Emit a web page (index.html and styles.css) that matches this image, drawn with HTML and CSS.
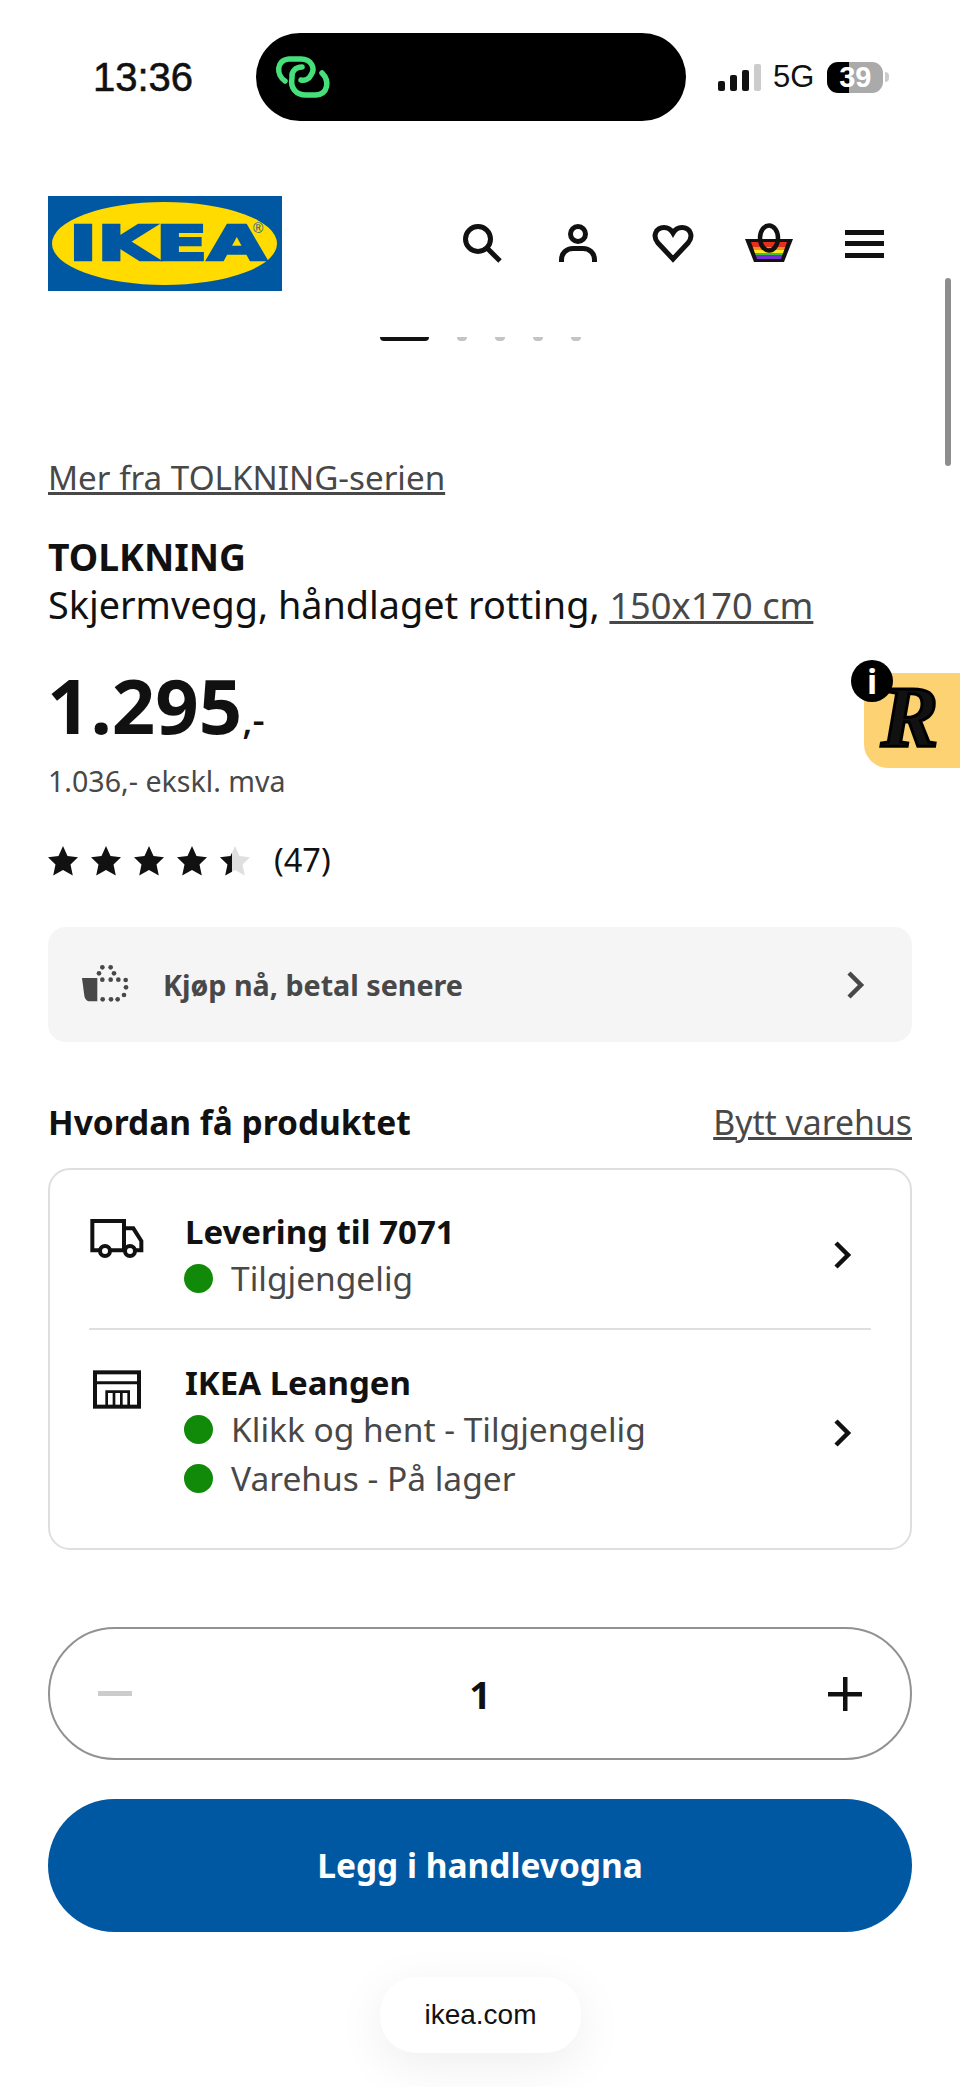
FILE: index.html
```html
<!DOCTYPE html>
<html lang="nb">

<head>
    <meta charset="UTF-8">
    <meta name="viewport" content="width=device-width, initial-scale=1.0">
    <title>TOLKNING Skjermvegg - IKEA</title>
    <link rel="stylesheet" href="styles.css">
</head>

<body>
    <svg class="defs" width="0" height="0" aria-hidden="true">
        <defs>
            <symbol id="star" viewBox="0 0 30 30">
                <polygon points="15,0 19.500,10 30,11.300 22.500,18.500 24.800,29.500 15,24 5.200,29.500 7.500,18.500 0,11.300 10.500,10"></polygon>
            </symbol>
            <symbol id="chevron" viewBox="0 0 20 30">
                <polyline points="3,3 15,15 3,27" fill="none" stroke="currentColor" stroke-width="4.500"></polyline>
            </symbol>
            <clipPath id="bag-inner">
                <polygon points="6,23 42,23 36,40 12,40"></polygon>
            </clipPath>
            <clipPath id="half-star">
                <rect x="0" y="0" width="12" height="30"></rect>
            </clipPath>
        </defs>
    </svg>

    <div class="phone-bar">
        <span class="clock">13:36</span>
        <div class="island">
            <svg class="island-icon" width="58" height="44" viewBox="0 0 58 44" fill="none" stroke="#45e07a" stroke-width="5.500" stroke-linecap="round">
                <path d="M11 26 C2 20 2 5 15 4 H27 C37 4 42 13 37 20 C35 24 31 26 27 25"></path>
                <path d="M28 12 C22 12 17 16 18 23 C16 33 22 40 32 40 H42 C54 39 56 26 48 18"></path>
            </svg>
        </div>
        <div class="phone-status">
            <div class="signal">
                <span class="bar bar-1"></span>
                <span class="bar bar-2"></span>
                <span class="bar bar-3"></span>
                <span class="bar bar-4"></span>
            </div>
            <span class="network">5G</span>
            <div class="battery"><span>39</span></div>
            <span class="battery-tip"></span>
        </div>
    </div>

    <header class="site-header">
        <svg class="logo" width="234" height="95" viewBox="0 0 234 95">
            <rect width="234" height="95" fill="#0058a3"></rect>
            <ellipse cx="116.500" cy="47.500" rx="112.500" ry="41.500" fill="#ffdb00"></ellipse>
            <text class="logo-word" x="21" y="64" textLength="197" lengthAdjust="spacingAndGlyphs">IKEA</text>
            <text class="logo-mark" x="205" y="37">®</text>
        </svg>
        <nav class="header-icons">
            <svg width="48" height="48" viewBox="0 0 48 48" fill="none" stroke="#111" stroke-width="5">
                <circle cx="20" cy="20" r="12.500"></circle>
                <line x1="29" y1="29" x2="42" y2="42"></line>
            </svg>
            <svg width="48" height="48" viewBox="0 0 48 48" fill="none" stroke="#111" stroke-width="5">
                <circle cx="24" cy="15" r="7.500"></circle>
                <path d="M7.500 43 v-2 c0-7 5-11.500 11.500-11.500 h10 c6.500 0 11.500 4.500 11.500 11.500 v2"></path>
            </svg>
            <svg width="48" height="48" viewBox="0 0 48 48" fill="none" stroke="#111" stroke-width="5">
                <path d="M24 40 L9 24 C3 17 7 8.500 15 8.500 C19 8.500 22 10.500 24 14 C26 10.500 29 8.500 33 8.500 C41 8.500 45 17 39 24 Z"></path>
            </svg>
            <svg width="48" height="48" viewBox="0 0 48 48">
                <polygon points="0,20 48,20 39,43 9,43" fill="#111"></polygon>
                <g clip-path="url(#bag-inner)">
                    <rect x="0" y="23" width="48" height="5" fill="#e6301e"></rect>
                    <rect x="0" y="28" width="48" height="3" fill="#f78d1e"></rect>
                    <rect x="0" y="31" width="48" height="3" fill="#ffe81e"></rect>
                    <rect x="0" y="34" width="48" height="2" fill="#3bc13b"></rect>
                    <rect x="0" y="36" width="48" height="1" fill="#2255d0"></rect>
                    <rect x="0" y="37" width="48" height="3" fill="#7a2bd8"></rect>
                </g>
                <ellipse cx="24" cy="19" rx="9" ry="12.500" fill="none" stroke="#111" stroke-width="4.500"></ellipse>
            </svg>
            <svg width="48" height="48" viewBox="0 0 48 48" fill="#111">
                <rect x="5" y="11" width="39" height="5"></rect>
                <rect x="5" y="22" width="39" height="5"></rect>
                <rect x="5" y="34" width="39" height="5"></rect>
            </svg>
        </nav>
    </header>

    <div class="gallery-dots">
        <span class="dot dot-active"></span>
        <span class="dot"></span>
        <span class="dot"></span>
        <span class="dot"></span>
        <span class="dot"></span>
    </div>

    <main class="product">
        <a class="series-link" href="#">Mer fra TOLKNING-serien</a>

        <h1 class="product-name">TOLKNING</h1>
        <p class="product-desc">Skjermvegg, håndlaget rotting, <a href="#">150x170 cm</a></p>

        <p class="price">1.295<span class="price-end">,-</span></p>
        <p class="price-ex">1.036,- ekskl. mva</p>

        <div class="rating">
            <div class="stars">
                <svg class="star"><use href="#star"></use></svg>
                <svg class="star"><use href="#star"></use></svg>
                <svg class="star"><use href="#star"></use></svg>
                <svg class="star"><use href="#star"></use></svg>
                <svg class="star star-half" viewBox="0 0 30 30">
                    <use href="#star" width="30" height="30" fill="#dfdfdf"></use>
                    <g clip-path="url(#half-star)"><use href="#star" width="30" height="30" fill="#111"></use></g>
                </svg>
            </div>
            <span class="rating-count">(47)</span>
        </div>

        <a class="pay-later" href="#">
            <svg width="50" height="42" viewBox="120 410 150 126" fill="#484848">
                <path d="M126 452 H172 V522 H150 C140 522 135 515 133 505 Z"></path>
                <circle cx="187" cy="420" r="7"></circle>
                <circle cx="212" cy="420" r="7"></circle>
                <circle cx="177" cy="438" r="7"></circle>
                <circle cx="222" cy="438" r="7"></circle>
                <circle cx="187" cy="457" r="7"></circle>
                <circle cx="212" cy="457" r="7"></circle>
                <circle cx="235" cy="457" r="7"></circle>
                <circle cx="257" cy="458" r="7"></circle>
                <circle cx="258" cy="480" r="7"></circle>
                <circle cx="252" cy="503" r="7"></circle>
                <circle cx="233" cy="516" r="7"></circle>
                <circle cx="213" cy="516" r="7"></circle>
                <circle cx="188" cy="516" r="7"></circle>
            </svg>
            <span class="pay-later-text">Kjøp nå, betal senere</span>
            <svg class="chevron"><use href="#chevron"></use></svg>
        </a>

        <div class="delivery-head">
            <h2>Hvordan få produktet</h2>
            <a href="#">Bytt varehus</a>
        </div>

        <section class="delivery-card">
            <div class="delivery-row">
                <svg class="delivery-icon" width="55" height="42" viewBox="60 55 165 126" fill="none" stroke="#111" stroke-width="12">
                    <path d="M88 152 H67 V64 H162 V152 H122"></path>
                    <path d="M162 86 H190 L214 124 V152 H197"></path>
                    <circle cx="105" cy="154" r="15"></circle>
                    <circle cx="180" cy="154" r="15"></circle>
                </svg>
                <div class="delivery-info">
                    <h3>Levering til 7071</h3>
                    <p class="stock"><span class="stock-dot"></span>Tilgjengelig</p>
                </div>
                <svg class="chevron chevron-dark"><use href="#chevron"></use></svg>
            </div>
            <div class="delivery-row">
                <svg class="delivery-icon" width="55" height="42" viewBox="60 505 165 126" fill="none" stroke="#111" stroke-width="12">
                    <rect x="75" y="515" width="132" height="103"></rect>
                    <line x1="75" y1="546" x2="207" y2="546" stroke-width="9"></line>
                    <path d="M110 618 V573 H176 V618 M132 618 V573 M154 618 V573" stroke-width="8"></path>
                </svg>
                <div class="delivery-info">
                    <h3>IKEA Leangen</h3>
                    <p class="stock"><span class="stock-dot"></span>Klikk og hent - Tilgjengelig</p>
                    <p class="stock"><span class="stock-dot"></span>Varehus - På lager</p>
                </div>
                <svg class="chevron chevron-dark chevron-low"><use href="#chevron"></use></svg>
            </div>
        </section>

        <div class="quantity">
            <span class="qty-minus"></span>
            <span class="qty-value">1</span>
            <svg width="34" height="34" viewBox="0 0 34 34" fill="#111">
                <rect x="0" y="15" width="34" height="4.500"></rect>
                <rect x="15" y="0" width="4.500" height="34"></rect>
            </svg>
        </div>

        <button class="add-to-cart" type="button">Legg i handlevogna</button>
    </main>

    <div class="scroll-thumb"></div>

    <aside class="review-badge">
        <span class="review-info">i</span>
        <span class="review-r">R</span>
    </aside>

    <div class="url-pill">ikea.com</div>
</body>

</html>
```

FILE: styles.css
```css
* {
    box-sizing: border-box;
}

html,
body {
    margin: 0;
    padding: 0;
}

body {
    position: relative;
    width: 960px;
    height: 2087px;
    overflow: hidden;
    background-color: #fff;
    color: #111;
    font-family: 'Noto Sans', sans-serif;
}

h1,
h2,
h3,
p {
    margin: 0;
}

a {
    color: #484848;
}

.defs {
    position: absolute;
}

/* phone status bar */
.phone-bar {
    display: flex;
    align-items: center;
    height: 88px;
    margin-top: 33px;
    padding-left: 93px;
    font-family: 'Liberation Sans', Arial, sans-serif;
}

.clock {
    width: 163px;
    font-size: 40px;
    font-weight: 500;
    -webkit-text-stroke: 0.6px #111;
}

.island {
    display: flex;
    align-items: center;
    width: 430px;
    height: 88px;
    padding-left: 18px;
    background-color: #000;
    border-radius: 44px;
}

.phone-status {
    display: flex;
    align-items: center;
    margin-left: 32px;
}

.signal {
    display: flex;
    align-items: flex-end;
    gap: 5px;
    height: 27px;
}

.bar {
    width: 7px;
    background-color: #111;
    border-radius: 2px;
}

.bar-1 {
    height: 10px;
}

.bar-2 {
    height: 16px;
}

.bar-3 {
    height: 21px;
}

.bar-4 {
    height: 27px;
    background-color: #ccc;
}

.network {
    margin-left: 12px;
    font-size: 31px;
}

.battery {
    width: 56px;
    height: 31px;
    margin-left: 13px;
    border-radius: 11px;
    background: linear-gradient(to right, #000 0, #000 22px, #aaa 22px);
    color: #fff;
    font-size: 29px;
    font-weight: bold;
    line-height: 31px;
    text-align: center;
}

.battery-tip {
    width: 4px;
    height: 10px;
    margin-left: 2px;
    background-color: #ccc;
    border-radius: 0 4px 4px 0;
}

/* site header */
.site-header {
    display: flex;
    align-items: center;
    justify-content: space-between;
    margin-top: 75px;
    padding: 0 72px 0 48px;
}

.logo {
    display: block;
}

.logo-word {
    fill: #0058a3;
    stroke: #0058a3;
    stroke-width: 2.5px;
    font-family: 'DejaVu Sans', sans-serif;
    font-size: 48px;
    font-weight: bold;
}

.logo-mark {
    fill: #0058a3;
    font-family: 'Liberation Sans', Arial, sans-serif;
    font-size: 14px;
}

.header-icons {
    display: flex;
    gap: 47.5px;
    margin-bottom: 2px;
}

.header-icons svg {
    display: block;
    overflow: visible;
}

/* clipped gallery pager under the header */
.gallery-dots {
    display: flex;
    align-items: flex-end;
    justify-content: center;
    gap: 28px;
    height: 4px;
    margin-top: 46px;
    overflow: hidden;
}

.dot {
    flex: none;
    width: 10px;
    height: 8px;
    background-color: #c4c4c4;
    border-radius: 4px;
}

.dot-active {
    width: 49px;
    background-color: #111;
}

/* product details */
.product {
    padding: 0 48px;
}

.series-link {
    display: block;
    width: max-content;
    margin-top: 115px;
    font-size: 33.200px;
    line-height: 44px;
}

.product-name {
    margin-top: 33px;
    font-size: 37.300px;
    font-weight: 700;
    line-height: 48px;
}

.product-desc {
    font-size: 37.800px;
    line-height: 48px;
}

.product-desc a {
    font-size: 36.200px;
}

.price {
    margin-top: 38px;
    margin-left: -1px;
    font-size: 76px;
    font-weight: 700;
    line-height: 76px;
}

.price-end {
    font-size: 38px;
    font-weight: 500;
    line-height: 0;
}

.price-ex {
    margin-top: 20px;
    color: #484848;
    font-size: 28.600px;
    line-height: 36px;
}

.rating {
    display: flex;
    align-items: center;
    height: 30px;
    margin-top: 47px;
}

.stars {
    display: flex;
    gap: 13px;
}

.star {
    display: block;
    width: 30px;
    height: 30px;
    fill: #111;
}

.star-half {
    fill: none;
}

.rating-count {
    margin-top: -3px;
    margin-left: 24px;
    font-size: 32.500px;
}

.pay-later {
    display: flex;
    align-items: center;
    height: 115px;
    margin-top: 51px;
    padding: 0 46px 0 32px;
    background-color: #f5f5f5;
    border-radius: 18px;
    text-decoration: none;
}

.pay-later-text {
    margin-left: 33px;
    font-size: 28.700px;
    font-weight: 700;
}

.chevron {
    display: block;
    flex: none;
    width: 20px;
    height: 30px;
    margin-left: auto;
    color: #484848;
}

.chevron-dark {
    color: #111;
}

.delivery-head {
    display: flex;
    align-items: baseline;
    justify-content: space-between;
    margin-top: 58px;
    font-size: 33.800px;
    line-height: 44px;
}

.delivery-head h2 {
    font-size: 33.500px;
    font-weight: 700;
}

.delivery-card {
    margin-top: 24px;
    padding: 40px 39px 48px;
    border: 2px solid #dfdfdf;
    border-radius: 22px;
}

.delivery-row {
    display: flex;
    align-items: flex-start;
}

.delivery-row + .delivery-row {
    margin-top: 28px;
    padding-top: 31px;
    border-top: 2px solid #dfdfdf;
}

.delivery-icon {
    flex: none;
    margin-top: 8px;
    margin-left: 1px;
}

.delivery-info {
    margin-left: 40px;
}

.delivery-info h3 {
    font-size: 33px;
    font-weight: 700;
    line-height: 44px;
}

.stock {
    display: flex;
    align-items: center;
    margin-top: 2px;
    color: #484848;
    font-size: 33.500px;
    line-height: 44px;
}

.stock + .stock {
    margin-top: 5px;
}

.stock-dot {
    flex: none;
    width: 29px;
    height: 29px;
    margin-right: 18px;
    margin-left: -1px;
    background-color: #128a09;
    border-radius: 50%;
}

.delivery-row .chevron {
    align-self: center;
    margin-right: 18px;
}

.delivery-row .chevron-low {
    margin-top: 4px;
}

/* quantity and buy button */
.quantity {
    display: flex;
    align-items: center;
    justify-content: space-between;
    height: 133px;
    margin-top: 77px;
    padding: 0 48px;
    background-color: #fff;
    border: 2px solid #929292;
    border-radius: 67px;
}

.qty-minus {
    width: 34px;
    height: 5px;
    background-color: #ccc;
}

.qty-value {
    font-size: 38px;
    font-weight: 700;
}

.add-to-cart {
    display: block;
    width: 100%;
    height: 133px;
    margin-top: 39px;
    padding: 0 0 2px;
    background-color: #0058a3;
    border: none;
    border-radius: 67px;
    color: #fff;
    font-family: 'Noto Sans', sans-serif;
    font-size: 33.500px;
    font-weight: 700;
}

/* things that float over the page */
.scroll-thumb {
    position: absolute;
    top: 278px;
    left: 945px;
    width: 6px;
    height: 188px;
    background-color: #8d8d8d;
    border-radius: 3px;
}

.review-badge {
    position: absolute;
    top: 673px;
    right: 0;
    width: 96px;
    height: 95px;
    background-color: #fdd272;
    border-radius: 8px 0 0 24px;
}

.review-info {
    position: absolute;
    top: -13px;
    left: -13px;
    width: 42px;
    height: 42px;
    background-color: #000;
    border-radius: 50%;
    color: #fff;
    font-size: 34px;
    font-weight: 700;
    line-height: 42px;
    text-align: center;
}

.review-r {
    position: absolute;
    top: 2px;
    left: 17px;
    font-family: 'Liberation Serif', serif;
    font-size: 86px;
    font-style: italic;
    font-weight: bold;
    line-height: 84px;
    -webkit-text-stroke: 3px #000;
}

.url-pill {
    position: absolute;
    top: 1977px;
    left: 380px;
    width: 201px;
    height: 76px;
    background-color: #fff;
    border-radius: 36px;
    box-shadow: 0 12px 50px rgba(0, 0, 0, 0.07);
    font-family: 'Liberation Sans', Arial, sans-serif;
    font-size: 28px;
    line-height: 76px;
    text-align: center;
}
```
